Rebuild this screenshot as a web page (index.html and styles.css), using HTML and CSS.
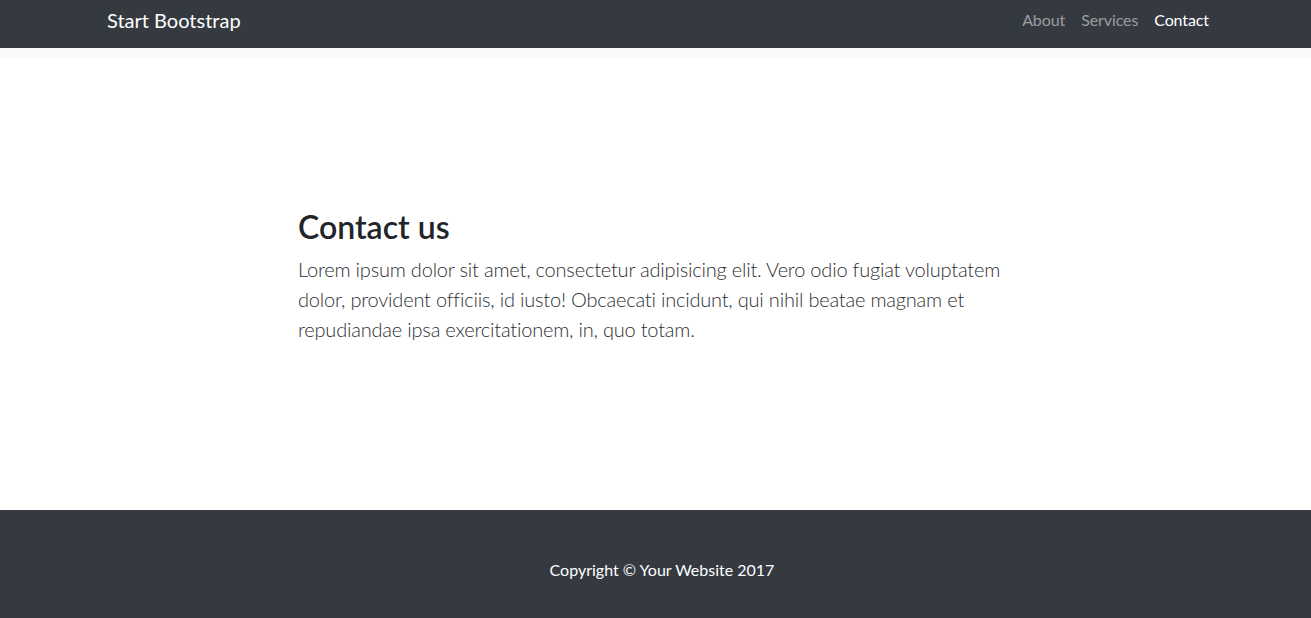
FILE: index.html
```html
<!DOCTYPE html>
<html lang="en">
<head>
<meta charset="utf-8">
<title>Start Bootstrap</title>
<link rel="stylesheet" href="styles.css">
</head>
<body>
<nav class="navbar">
  <a class="brand" href="#">Start Bootstrap</a>
  <ul class="nav-links">
    <li><a class="nav-link" href="#">About</a></li>
    <li><a class="nav-link" href="#">Services</a></li>
    <li><a class="nav-link active" href="#">Contact</a></li>
  </ul>
</nav>
<header class="strip"></header>
<section class="section">
  <div class="content">
    <h2 class="title">Contact us</h2>
    <p class="lead">Lorem ipsum dolor sit amet, consectetur adipisicing elit. Vero odio fugiat voluptatem dolor, provident officiis, id iusto! Obcaecati incidunt, qui nihil beatae magnam et repudiandae ipsa exercitationem, in, quo totam.</p>
  </div>
</section>
<footer class="footer">
  <p class="copyright">Copyright &copy; Your Website 2017</p>
</footer>
</body>
</html>
```
FILE: styles.css
```css
* { box-sizing: border-box; }
body {
  margin: 0;
  font-family: "Lato", "Noto Sans", sans-serif;
  font-size: 16px;
  line-height: 1.5;
  color: #212529;
  background: #fff;
}
.navbar {
  height: 48px;
  background: #343a40;
  display: flex;
  align-items: center;
  justify-content: space-between;
  padding: 0 94px 0 107px;
}
.brand {
  color: #fff;
  font-size: 20px;
  line-height: 30px;
  text-decoration: none;
  margin-top: -8px;
}
.nav-links {
  list-style: none;
  margin: -8px 0 0;
  padding: 0;
  display: flex;
}
.nav-link {
  display: block;
  padding: 0 8px;
  color: rgba(255, 255, 255, 0.5);
  text-decoration: none;
  font-size: 16px;
  line-height: 24px;
  letter-spacing: -0.1px;
}
.nav-link.active { color: #fff; }
.strip {
  height: 10px;
  background: #f8f9fa;
}
.section {
  padding: 150px 0;
}
.content {
  width: 730px;
  margin-left: calc(50% - 357.5px);
}
.title {
  margin: 0 0 8px;
  font-size: 32px;
  font-weight: 600;
  line-height: 1.2;
  color: #212529;
}
.lead {
  margin: 0 0 16px;
  font-size: 20px;
  font-weight: 300;
  line-height: 1.5;
  letter-spacing: -0.2px;
  color: #2b3035;
}
.footer {
  background: #343a40;
  padding: 48px 0 48px 13px;
}
.copyright {
  margin: 0;
  text-align: center;
  color: #fff;
}
```
